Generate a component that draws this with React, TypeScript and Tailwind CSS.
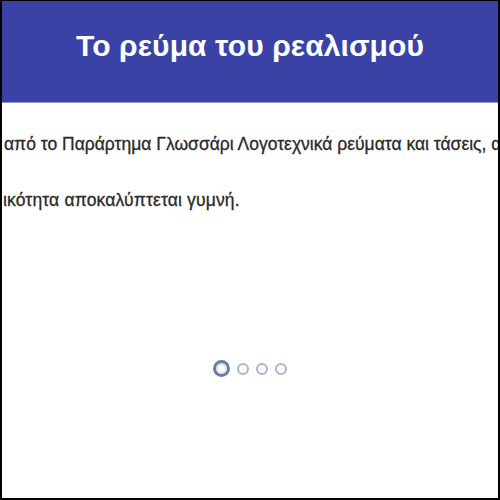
import React from 'react';

const dots = [0, 1, 2, 3];

export default function App() {
  return (
    <div className="w-[500px] h-[500px] bg-white border-2 border-black border-t overflow-hidden flex flex-col font-['Liberation_Sans',Arial,sans-serif]">
      <header className="h-[102px] shrink-0 bg-[#3a42a6] border-b border-[#8f94d3] flex items-center justify-center">
        <h1 className="text-[30px] font-bold text-white tracking-[0.1px] -mt-[12px]">Το ρεύμα του ρεαλισμού</h1>
      </header>
      <div className="overflow-hidden pt-[27px] text-[17.5px] text-[#2a2a2a] whitespace-nowrap [-webkit-text-stroke:0.3px_#2a2a2a]">
        <p className="pl-[2px] leading-[28px]">από το Παράρτημα Γλωσσάρι Λογοτεχνικά ρεύματα και τάσεις, από</p>
        <p className="pl-[1px] mt-[28px] leading-[28px] tracking-[0.15px]">ικότητα αποκαλύπτεται γυμνή.</p>
      </div>
      <div className="mt-[146px] flex items-center justify-center gap-[7px]">
        {dots.map((d) =>
          d === 0 ? (
            <span key={d} className="w-[17px] h-[17px] rounded-full border-[3px] border-[#6d7f9c] bg-[#dbe6f5] flex items-center justify-center">
              <span className="w-[7px] h-[7px] rounded-full bg-white" />
            </span>
          ) : (
            <span key={d} className="w-[12px] h-[12px] rounded-full border-[2px] border-[#a9b6cb]" />
          )
        )}
      </div>
    </div>
  );
}
